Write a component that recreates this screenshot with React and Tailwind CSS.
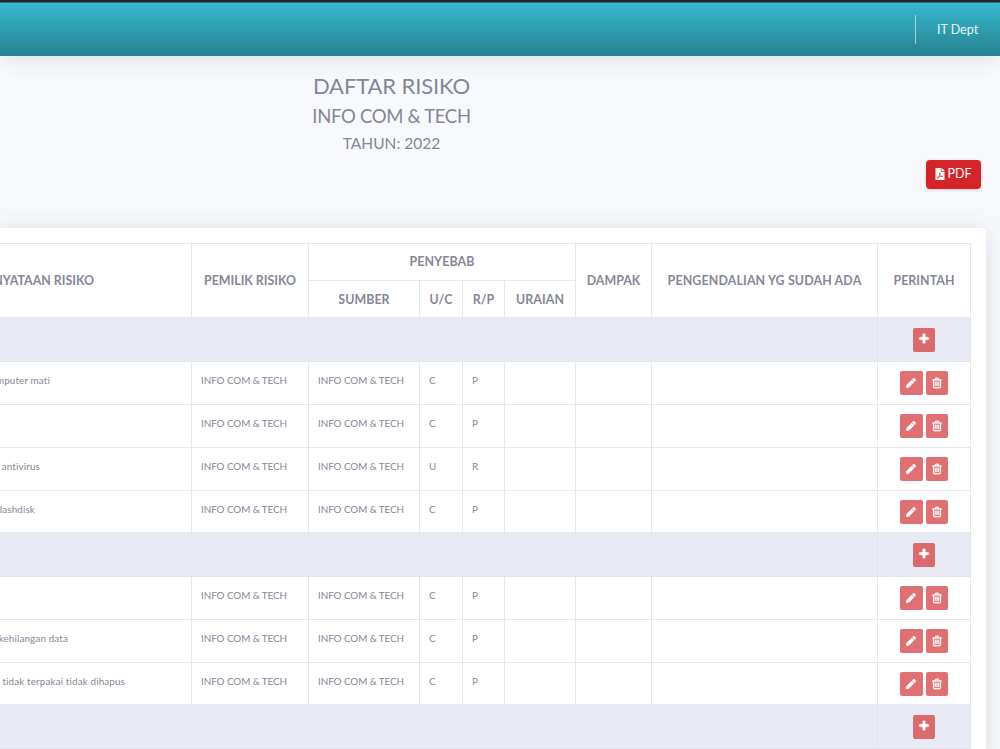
import { FaFilePdf, FaPen } from "react-icons/fa";

const border = "border-[#e5e7f1]";
const head = `border-r border-b ${border} p-0 text-center align-middle font-bold text-[12.4px] leading-[18px]`;

const rows = [
  { group: true, h: "h-[44px]" },
  { text: "mputer mati", pad: "pr-[141px]", uc: "C", rp: "P", h: "h-[43px]" },
  { text: "", pad: "", uc: "C", rp: "P", h: "h-[43px]" },
  { text: "antivirus", pad: "pr-[151px]", uc: "U", rp: "R", h: "h-[43px]" },
  { text: "lashdisk", pad: "pr-[156px]", uc: "C", rp: "P", h: "h-[42px]" },
  { group: true, h: "h-[44px]" },
  { text: "", pad: "", uc: "C", rp: "P", h: "h-[43px]" },
  { text: "kehilangan data", pad: "pr-[123px]", uc: "C", rp: "P", h: "h-[43px]" },
  { text: "tidak terpakai tidak dihapus", pad: "pr-[66px]", uc: "C", rp: "P", h: "h-[42px]" },
  { group: true, h: "h-[44px]" },
];

function PlusIcon() {
  return (
    <svg viewBox="0 0 1792 1792" className="size-[12px]" fill="currentColor" stroke="currentColor" strokeWidth="60">
      <path d="M1600 736v192q0 40-28 68t-68 28h-416v416q0 40-28 68t-68 28h-192q-40 0-68-28t-28-68v-416h-416q-40 0-68-28t-28-68v-192q0-40 28-68t68-28h416v-416q0-40 28-68t68-28h192q40 0 68 28t28 68v416h416q40 0 68 28t28 68z" />
    </svg>
  );
}

function TrashIcon() {
  return (
    <svg viewBox="0 0 1792 1792" className="size-[12px]" fill="currentColor" stroke="currentColor" strokeWidth="50">
      <path d="M704 736v576q0 14-9 23t-23 9h-64q-14 0-23-9t-9-23v-576q0-14 9-23t23-9h64q14 0 23 9t9 23zm256 0v576q0 14-9 23t-23 9h-64q-14 0-23-9t-9-23v-576q0-14 9-23t23-9h64q14 0 23 9t9 23zm256 0v576q0 14-9 23t-23 9h-64q-14 0-23-9t-9-23v-576q0-14 9-23t23-9h64q14 0 23 9t9 23zm128 724v-948h-896v948q0 22 7 40.5t14.5 27 10.5 8.5h832q3 0 10.5-8.5t14.5-27 7-40.5zm-672-1076h448l-48-117q-7-9-17-11h-317q-10 2-17 11zm928 32v64q0 14-9 23t-23 9h-96v948q0 83-47 143.5t-113 60.5h-832q-66 0-113-58.5t-47-141.5v-952h-96q-14 0-23-9t-9-23v-64q0-14 9-23t23-9h309l70-167q15-37 54-63t79-26h320q40 0 79 26t54 63l70 167h309q14 0 23 9t9 23z" />
    </svg>
  );
}

function ActionButton({ children, className }) {
  return (
    <button className={`flex h-6 items-center justify-center rounded-[2px] text-white ${className}`}>
      {children}
    </button>
  );
}

function GroupRow({ row }) {
  return (
    <tr className={`${row.h} bg-[#e8ebf3]`}>
      <td colSpan={8} className="border-r border-b border-[#e2e5ef] p-0" />
      <td className="border-r border-b border-[#e2e5ef] p-0">
        <div className="flex justify-center">
          <ActionButton className="w-[22px] bg-[#da6a6e] pb-px">
            <PlusIcon />
          </ActionButton>
        </div>
      </td>
    </tr>
  );
}

function RiskRow({ row }) {
  const cell = `border-r border-b ${border} p-0 pb-[6px] pl-[9px] align-middle whitespace-nowrap tracking-[-0.05px]`;
  return (
    <tr className={`${row.h} text-[9.85px] leading-[14px]`}>
      <td className={`overflow-hidden border-r border-b ${border} p-0 pb-[6px] align-middle`}>
        <div className={`flex justify-end whitespace-nowrap tracking-[0.14px] ${row.pad}`}>{row.text}</div>
      </td>
      <td className={cell}>INFO COM &amp; TECH</td>
      <td className={cell}>INFO COM &amp; TECH</td>
      <td className={cell}>{row.uc}</td>
      <td className={cell}>{row.rp}</td>
      <td className={cell} />
      <td className={cell} />
      <td className={cell} />
      <td className={`border-r border-b ${border} p-0`}>
        <div className="flex justify-center gap-[3px] pr-px">
          <ActionButton className="w-[23px] bg-[#e17072]">
            <FaPen size={10} />
          </ActionButton>
          <ActionButton className="w-[22px] bg-[#e17072]">
            <TrashIcon />
          </ActionButton>
        </div>
      </td>
    </tr>
  );
}

export default function App() {
  return (
    <div className="flex h-[749px] w-[1000px] flex-col overflow-hidden bg-[#f8f9fd] font-['Lato',sans-serif] text-[#858796] [font-variant-ligatures:none]">
      <div className="h-[3px] shrink-0 border-b border-[#2c7080] bg-[#24242e]" />
      <header className="flex h-[53px] shrink-0 items-center justify-end bg-linear-to-b from-[#36bad0] to-[#26818f] pr-[22px] shadow-[0_2px_22px_rgba(58,59,69,0.15)]">
        <div className="h-[29px] w-px bg-white/55" />
        <span className="ml-[21px] w-[41px] pt-px text-[12.5px] whitespace-nowrap text-white/90">IT Dept</span>
      </header>

      <main className="flex min-h-0 flex-1 flex-col">
        <div className="flex w-[783px] flex-col items-center pt-[15px]">
          <h1 className="text-[22px] leading-[30px] tracking-[-0.12px]">DAFTAR RISIKO</h1>
          <h2 className="pt-px text-[18.5px] leading-[29px] tracking-[-0.32px]">INFO COM &amp; TECH</h2>
          <h3 className="text-[15.5px] leading-[24px]">TAHUN: 2022</h3>
        </div>
        <div className="mt-[5px] flex justify-end pr-[19px]">
          <button className="flex h-[29px] w-[55px] items-center justify-center gap-[3px] rounded-[4px] bg-[#d42427] pr-px text-[12.5px] text-white shadow-[0_1px_3px_rgba(58,59,69,0.25)]">
            <FaFilePdf size={12} className="mb-px w-[10px]" />
            <span className="tracking-[-0.1px]">PDF</span>
          </button>
        </div>

        <section className="mt-[39px] h-[540px] w-[986px] shrink-0 rounded-tr-[5px] bg-white pt-[15px] shadow-[0_2px_26px_rgba(58,59,69,0.15)]">
          <table className={`w-[971px] table-fixed border-separate border-spacing-0 border-t ${border}`}>
            <colgroup>
              <col className="w-[192px]" />
              <col className="w-[117px]" />
              <col className="w-[111px]" />
              <col className="w-[43px]" />
              <col className="w-[42px]" />
              <col className="w-[71px]" />
              <col className="w-[76px]" />
              <col className="w-[226px]" />
              <col className="w-[93px]" />
            </colgroup>
            <thead>
              <tr className="h-[37px]">
                <th rowSpan={2} className={`${head} overflow-hidden`}>
                  <div className="flex justify-end pr-[97px] whitespace-nowrap">NYATAAN RISIKO</div>
                </th>
                <th rowSpan={2} className={head}>PEMILIK RISIKO</th>
                <th colSpan={4} className={`${head} tracking-[0.1px]`}>PENYEBAB</th>
                <th rowSpan={2} className={head}>DAMPAK</th>
                <th rowSpan={2} className={`${head} tracking-[0.14px]`}>PENGENDALIAN YG SUDAH ADA</th>
                <th rowSpan={2} className={`${head} tracking-[0.06px]`}>PERINTAH</th>
              </tr>
              <tr className="h-[37px]">
                <th className={`${head} pt-px tracking-[0.05px]`}>SUMBER</th>
                <th className={`${head} pt-px`}>U/C</th>
                <th className={`${head} pt-px`}>R/P</th>
                <th className={`${head} pt-px tracking-[0.08px]`}>URAIAN</th>
              </tr>
            </thead>
            <tbody>
              {rows.map((row, i) => (row.group ? <GroupRow key={i} row={row} /> : <RiskRow key={i} row={row} />))}
            </tbody>
          </table>
        </section>
      </main>
    </div>
  );
}
